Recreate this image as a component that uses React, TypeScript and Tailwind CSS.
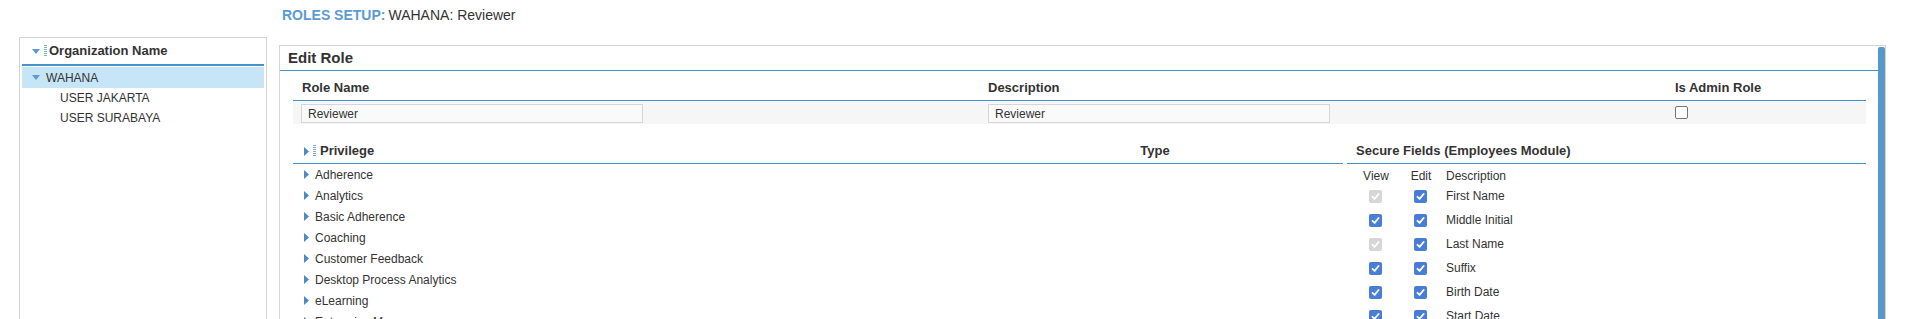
import React from 'react';

const privileges = [
  'Adherence',
  'Analytics',
  'Basic Adherence',
  'Coaching',
  'Customer Feedback',
  'Desktop Process Analytics',
  'eLearning',
  'Enterprise Manager',
];

const secureFields = [
  { name: 'First Name', viewLocked: true },
  { name: 'Middle Initial', viewLocked: false },
  { name: 'Last Name', viewLocked: true },
  { name: 'Suffix', viewLocked: false },
  { name: 'Birth Date', viewLocked: false },
  { name: 'Start Date', viewLocked: false },
];

function CaretDown() {
  return (
    <svg width="8" height="5" viewBox="0 0 8 5" className="shrink-0">
      <path d="M0 0 L8 0 L4 5 Z" fill="#5b9bd1" />
    </svg>
  );
}

function CaretRight() {
  return (
    <svg width="5" height="9" viewBox="0 0 5 9" className="shrink-0">
      <path d="M0 0 L5 4.5 L0 9 Z" fill="#4a8ac8" />
    </svg>
  );
}

// column resize grip: a stack of tiny dots
function Grip() {
  return (
    <svg width="3" height="12" viewBox="0 0 3 12" className="shrink-0">
      {[0, 2, 4, 6, 8, 10].map((y) => (
        <rect key={y} x="0" y={y} width="3" height="1" fill="#7fb0da" />
      ))}
    </svg>
  );
}

function Check({ locked }: { locked?: boolean }) {
  return (
    <span
      className={
        locked
          ? 'flex h-[13px] w-[13px] items-center justify-center rounded-[2px] bg-[#d6d6d6]'
          : 'flex h-[13px] w-[13px] items-center justify-center rounded-[2px] bg-[#4a7ed6]'
      }
    >
      <svg width="9" height="9" viewBox="0 0 9 9">
        <path d="M1.5 4.8 L3.6 6.8 L7.6 2" stroke="white" strokeWidth="1.8" fill="none" strokeLinecap="round" strokeLinejoin="round" />
      </svg>
    </span>
  );
}

export default function App() {
  return (
    <div className="h-[319px] w-[1916px] overflow-hidden bg-white font-['Liberation_Sans',Arial,sans-serif] text-[#333]">
      {/* page title */}
      <div className="flex h-[30px] items-center pl-[282px] text-[14px]">
        <span className="font-bold text-[#5b9bd1]">ROLES SETUP:</span>
        <span className="ml-[3px]">WAHANA: Reviewer</span>
      </div>

      <div className="flex items-start">
        {/* organization tree */}
        <div className="ml-[19px] mt-[7px] h-[300px] w-[248px] border border-[#d4d4d4] px-[2px]">
          <div className="flex h-[26px] items-center pl-[10px]">
            <CaretDown />
            <span className="ml-[4px]"><Grip /></span>
            <span className="ml-[2px] text-[13px] font-bold">Organization Name</span>
          </div>
          <div className="h-[2px] bg-[#4a90c8]" />
          <div className="mt-[1px] flex h-[21px] items-center bg-[#c6e6f8] pl-[10px] text-[12px]">
            <CaretDown />
            <span className="ml-[6px]">WAHANA</span>
          </div>
          <div className="flex h-[20px] items-center pl-[38px] text-[12px]">USER JAKARTA</div>
          <div className="flex h-[20px] items-center pl-[38px] text-[12px]">USER SURABAYA</div>
        </div>

        {/* edit role panel */}
        <div className="ml-[12px] mt-[15px] flex h-[300px] w-[1607px] border border-[#d4d4d4]">
          <div className="flex-1">
            <div className="flex h-[25px] items-center border-b border-[#4a90c8] pl-[8px] text-[15px] font-bold">
              Edit Role
            </div>

            <div className="pl-[13px] pr-[12px]">
              {/* role fields */}
              <div className="flex h-[30px] items-center border-b border-[#4a90c8] pt-[5px] text-[13px] font-bold">
                <div className="w-[686px] pl-[9px]">Role Name</div>
                <div className="w-[687px] pl-[9px]">Description</div>
                <div className="flex-1 pl-[9px]">Is Admin Role</div>
              </div>
              <div className="flex h-[23px] bg-[#f6f6f6] pt-[3px] text-[12px]">
                <div className="w-[686px] pl-[8px]">
                  <div className="flex h-[19px] w-[342px] items-center border border-[#d6d6d6] bg-[#fafafa] pl-[6px]">Reviewer</div>
                </div>
                <div className="w-[687px] pl-[9px]">
                  <div className="flex h-[19px] w-[342px] items-center border border-[#d6d6d6] bg-[#fafafa] pl-[6px]">Reviewer</div>
                </div>
                <div className="flex-1 pl-[9px] pt-[2px]">
                  <span className="block h-[13px] w-[13px] rounded-[2px] border border-[#767676] bg-white" />
                </div>
              </div>

              {/* privileges + secure fields */}
              <div className="flex gap-[4px]">
                <div className="w-[1050px]">
                  <div className="flex h-[40px] items-center border-b border-[#4a90c8] pt-[15px] text-[13px] font-bold">
                    <div className="flex flex-1 items-center pl-[11px]">
                      <CaretRight />
                      <span className="ml-[4px]"><Grip /></span>
                      <span className="ml-[4px]">Privilege</span>
                    </div>
                    <div className="w-[376px] text-center">Type</div>
                  </div>
                  {privileges.map((p) => (
                    <div key={p} className="flex h-[21px] items-center pl-[11px] text-[12px]">
                      <CaretRight />
                      <span className="ml-[6px]">{p}</span>
                    </div>
                  ))}
                </div>

                <div className="flex-1">
                  <div className="flex h-[40px] items-center border-b border-[#4a90c8] pl-[9px] pt-[15px] text-[13px] font-bold">
                    Secure Fields (Employees Module)
                  </div>
                  <div className="flex h-[20px] items-center pl-[12px] pt-[3px] text-[12px]">
                    <div className="w-[34px] text-center">View</div>
                    <div className="ml-[11px] w-[34px] text-center">Edit</div>
                    <div className="ml-[8px]">Description</div>
                  </div>
                  {secureFields.map((f) => (
                    <div key={f.name} className="flex h-[24px] items-center pl-[12px] text-[12px]">
                      <div className="flex w-[34px] justify-center pr-[2px]">
                        <Check locked={f.viewLocked} />
                      </div>
                      <div className="ml-[11px] flex w-[34px] justify-center pr-[2px]">
                        <Check />
                      </div>
                      <div className="ml-[8px]">{f.name}</div>
                    </div>
                  ))}
                </div>
              </div>
            </div>
          </div>
          {/* scrollbar */}
          <div className="mt-[1px] w-[7px] rounded-t-[2px] bg-[#5499c9]" />
        </div>
      </div>
    </div>
  );
}
